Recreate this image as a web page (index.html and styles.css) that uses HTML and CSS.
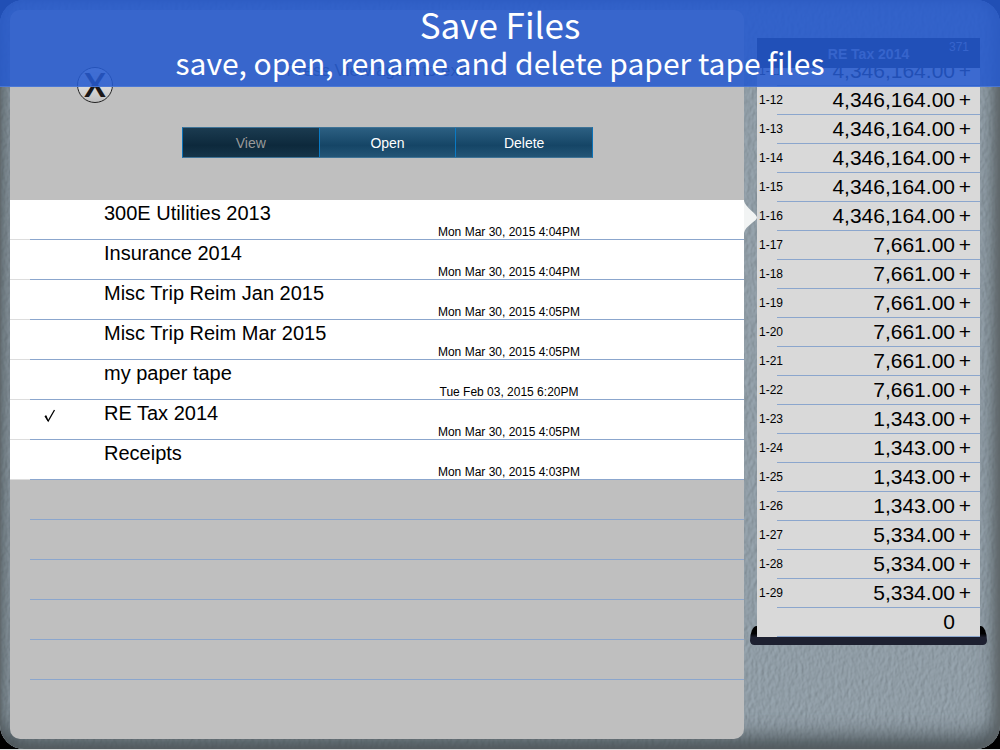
FILE: index.html
```html
<!DOCTYPE html>
<html lang="en">
  <head>
    <meta charset="UTF-8" />
    <meta name="viewport" content="width=device-width, initial-scale=1.0" />
    <title>Save Files</title>
    <link rel="stylesheet" href="styles.css">
  </head>

  <body>
    <header class="banner">
      <h1>Save Files</h1>
      <p>save, open, rename and delete paper tape files</p>
    </header>

    <div class="device">
      <svg class="texture" aria-hidden="true">
        <filter id="leather" x="0" y="0" width="100%" height="100%">
          <feTurbulence type="fractalNoise" baseFrequency="0.3 0.18" numOctaves="2" seed="4" result="noise" />
          <feDiffuseLighting in="noise" lighting-color="#9eacb6" surfaceScale="0.600" diffuseConstant="1">
            <feDistantLight azimuth="200" elevation="54" />
          </feDiffuseLighting>
        </filter>
        <rect width="100%" height="100%" filter="url(#leather)" />
      </svg>
      <div class="edge"></div>

      <main class="panel">
        <div class="panel-head">
          <button type="button" class="close" aria-label="Close">X</button>
          <p class="hint">Press View again to exit</p>
          <div class="modes">
            <button type="button" class="active">View</button>
            <button type="button">Open</button>
            <button type="button">Delete</button>
          </div>
        </div>
        <ul class="files">
          <li><span class="check"></span><span class="name">300E Utilities 2013</span><time>Mon Mar 30, 2015 4:04PM</time></li>
          <li><span class="check"></span><span class="name">Insurance 2014</span><time>Mon Mar 30, 2015 4:04PM</time></li>
          <li><span class="check"></span><span class="name">Misc Trip Reim Jan 2015</span><time>Mon Mar 30, 2015 4:05PM</time></li>
          <li><span class="check"></span><span class="name">Misc Trip Reim Mar 2015</span><time>Mon Mar 30, 2015 4:05PM</time></li>
          <li><span class="check"></span><span class="name">my paper tape</span><time>Tue Feb 03, 2015 6:20PM</time></li>
          <li>
            <span class="check">
              <svg width="12" height="14" viewBox="0 0 12 14"><path d="M1 7l3.2 5L10.500 1" fill="none" stroke="#000" stroke-width="1.300" /><path d="M1 6.500l1.500 0 2 5.500h-1z" /></svg>
            </span>
            <span class="name">RE Tax 2014</span><time>Mon Mar 30, 2015 4:05PM</time>
          </li>
          <li><span class="check"></span><span class="name">Receipts</span><time>Mon Mar 30, 2015 4:03PM</time></li>
          <li class="blank"></li>
          <li class="blank"></li>
          <li class="blank"></li>
          <li class="blank"></li>
          <li class="blank"></li>
        </ul>
        <svg class="pointer" width="13" height="32" viewBox="0 0 13 32"><path d="M0 0C1 6 13 13 13 16.500C13 20 1 25 0 32z" fill="#f2f4f4" /></svg>
      </main>

      <aside class="tape">
        <div class="tape-head"><h2>RE Tax 2014</h2><span>371</span></div>
        <table>
          <tr><th>1-11</th><td>4,346,164.00</td><td class="op">+</td></tr>
          <tr><th>1-12</th><td>4,346,164.00</td><td class="op">+</td></tr>
          <tr><th>1-13</th><td>4,346,164.00</td><td class="op">+</td></tr>
          <tr><th>1-14</th><td>4,346,164.00</td><td class="op">+</td></tr>
          <tr><th>1-15</th><td>4,346,164.00</td><td class="op">+</td></tr>
          <tr><th>1-16</th><td>4,346,164.00</td><td class="op">+</td></tr>
          <tr><th>1-17</th><td>7,661.00</td><td class="op">+</td></tr>
          <tr><th>1-18</th><td>7,661.00</td><td class="op">+</td></tr>
          <tr><th>1-19</th><td>7,661.00</td><td class="op">+</td></tr>
          <tr><th>1-20</th><td>7,661.00</td><td class="op">+</td></tr>
          <tr><th>1-21</th><td>7,661.00</td><td class="op">+</td></tr>
          <tr><th>1-22</th><td>7,661.00</td><td class="op">+</td></tr>
          <tr><th>1-23</th><td>1,343.00</td><td class="op">+</td></tr>
          <tr><th>1-24</th><td>1,343.00</td><td class="op">+</td></tr>
          <tr><th>1-25</th><td>1,343.00</td><td class="op">+</td></tr>
          <tr><th>1-26</th><td>1,343.00</td><td class="op">+</td></tr>
          <tr><th>1-27</th><td>5,334.00</td><td class="op">+</td></tr>
          <tr><th>1-28</th><td>5,334.00</td><td class="op">+</td></tr>
          <tr><th>1-29</th><td>5,334.00</td><td class="op">+</td></tr>
          <tr><th></th><td>0</td><td class="op"></td></tr>
        </table>
        <div class="slot"></div>
      </aside>
    </div>
  </body>
</html>
```

FILE: styles.css
```css
* {
  margin: 0;
  padding: 0;
  box-sizing: border-box;
}
body {
  position: relative;
  min-height: 100vh;
  display: flex;
  background-color: #000;
  border-bottom: 1px solid #ddd;
  font-family: 'Liberation Sans', Arial, sans-serif;
  color: #000;
}
button {
  font-family: inherit;
  cursor: pointer;
}

/* caption laid over the top of the device */
.banner {
  position: absolute;
  z-index: 5;
  top: 0;
  left: 0;
  width: 100%;
  height: 87px;
  background-color: rgba(38, 90, 206, 0.88);
  border-bottom: 1px solid rgba(80, 125, 215, 0.8);
  color: #fff;
  text-align: center;
  font-family: 'Noto Sans CJK SC', sans-serif;
}
.banner h1 {
  font-size: 35px;
  font-weight: normal;
  line-height: 48px;
}
.banner p {
  font-size: 30px;
  line-height: 28px;
}

.device {
  position: relative;
  flex: 1;
  display: flex;
  gap: 13px;
  padding: 10px 20px 10px 10px;
  border-radius: 24px;
  overflow: hidden;
  background-color: #84929b;
}
.texture,
.edge {
  position: absolute;
  top: 0;
  left: 0;
  width: 100%;
  height: 100%;
}
.edge {
  border-radius: 24px;
  box-shadow: inset -4px 0 10px #60676a, inset 0 -10px 24px #3c4549, inset 0 0 3px #777;
}

.panel {
  position: relative;
  flex: 1;
  border-radius: 10px;
  background-color: #bfbfbf;
}
.panel-head {
  position: relative;
  height: 190px;
  padding-top: 117px;
}
.close {
  position: absolute;
  top: 57px;
  left: 67px;
  width: 36px;
  height: 36px;
  border: 1px solid #222;
  border-radius: 50%;
  background-image: linear-gradient(#fff, #bfbfbf);
  font-family: Lato, sans-serif;
  font-size: 32px;
  font-weight: bold;
  line-height: 34px;
  color: #1a1718;
}
.hint {
  position: absolute;
  top: 50px;
  left: 0;
  width: 100%;
  text-align: center;
  font-size: 17px;
  line-height: 22px;
  color: #333;
}
.modes {
  display: flex;
  width: 56%;
  margin-left: 172px;
  border: 1px solid #0b72b8;
  border-top-color: #3f7396;
  border-bottom-color: #3f7396;
}
.modes button {
  flex: 1;
  height: 29px;
  border: 0;
  background-image: linear-gradient(#2c5f82, #154566 60%, #235576);
  color: #fff;
  font-size: 14px;
}
.modes button + button {
  border-left: 1px solid #0a7ac4;
}
.modes .active {
  background-image: linear-gradient(#1b3b50, #0d293c 60%, #153549);
  color: #999;
}

.files {
  list-style: none;
}
.files li {
  display: grid;
  grid-template-columns: 94px 1fr 308px;
  height: 40px;
  background: linear-gradient(#8ba6cd, #8ba6cd) 20px 100% / 100% 1px no-repeat,
    linear-gradient(#ddd, #ddd) 0 100% / 20px 1px no-repeat #fff;
}
.files .blank {
  background: linear-gradient(#8ba6cd, #8ba6cd) 20px 100% / 100% 1px no-repeat;
}
.files .check {
  padding: 9px 0 0 34px;
}
.files .name {
  font-size: 20px;
  line-height: 26px;
}
.files time {
  width: 146px;
  padding-top: 25px;
  text-align: center;
  font-size: 12px;
  line-height: 14px;
}
.pointer {
  position: absolute;
  z-index: 3;
  top: 191px;
  left: 100%;
}

.tape {
  position: relative;
  width: 223px;
  padding-top: 28px;
}
.tape-head {
  position: relative;
  z-index: 2;
  height: 30px;
  background-color: #060a18;
  color: #aab;
  text-align: center;
}
.tape-head h2 {
  font-size: 14px;
  line-height: 32px;
}
.tape-head span {
  position: absolute;
  top: 2px;
  right: 11px;
  font-size: 12px;
}
.tape table {
  position: relative;
  z-index: 1;
  width: 100%;
  margin-top: -11px;
  border-collapse: collapse;
  background-color: #d9d9d9;
}
.tape tr {
  height: 29px;
  background: linear-gradient(#8ba6cd, #8ba6cd) 20px 100% / 100% 1px no-repeat;
}
.tape th {
  padding: 0 0 2px 2px;
  text-align: left;
  font-size: 12px;
  font-weight: normal;
}
.tape td {
  padding-bottom: 1px;
  text-align: right;
  font-size: 21px;
  line-height: 28px;
}
.tape .op {
  width: 25px;
  padding-right: 9px;
}
.slot {
  position: absolute;
  top: 616px;
  left: -7px;
  right: -7px;
  height: 19px;
  border-radius: 8px 8px 5px 5px / 18px 18px 5px 5px;
  background-image: linear-gradient(#000 40%, #1d2030 60%);
}
```
